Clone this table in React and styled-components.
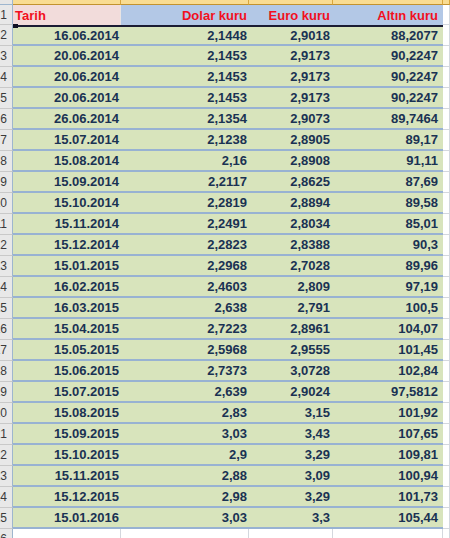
import React from "react";
import styled, { createGlobalStyle } from "styled-components";

const Global = createGlobalStyle`
  html, body { margin: 0; padding: 0; background: #ffffff; }
  body { width: 450px; height: 538px; overflow: hidden; font-family: "Liberation Sans", Arial, sans-serif; }
`;

const COLS = "13px 108px 128px 84px 110px 1fr";

const Sheet = styled.div`
  display: flex;
  flex-direction: column;
  width: 450px;
  height: 538px;
  overflow: hidden;
  background: #ffffff;
`;

const Row = styled.div`
  display: grid;
  grid-template-columns: ${COLS};
  height: ${(p) => p.$h}px;
  flex: none;
`;

const Corner = styled.div`
  background: #e6e6e6;
  border-right: 1px solid #9eb6ce;
  border-bottom: 1px solid #9eb6ce;
  box-sizing: border-box;
`;

const ColHead = styled.div`
  background: #f9dc92;
  border-right: 1px solid #d9a63d;
  border-bottom: 1px solid #c2922f;
  box-sizing: border-box;
`;

const RowHead = styled.div`
  background: #e8e8e8;
  border-right: 1px solid #9eb6ce;
  border-bottom: 1px solid #c9c9c9;
  box-sizing: border-box;
  color: #3a3a3a;
  font-size: 12px;
  line-height: 1;
  display: flex;
  align-items: center;
  justify-content: flex-end;
  padding-right: 5px;
  overflow: hidden;
  white-space: nowrap;
`;

const RowNum = styled.span`
  flex: none;
`;

const HeadCell = styled.div`
  background: ${(p) => (p.$pink ? "#f2dcdb" : "#b3c8e6")};
  ${(p) => (p.$pink ? "border-right: 1px solid #e9e4e4;" : "")}
  box-sizing: border-box;
  color: #f2101e;
  font-weight: bold;
  font-size: 13px;
  display: flex;
  align-items: center;
  justify-content: ${(p) => (p.$left ? "flex-start" : "flex-end")};
  padding: ${(p) => (p.$left ? "1px 0 0 2px" : `1px ${p.$pr || 3}px 0 0`)};
  white-space: nowrap;
`;

const Blank = styled.div`
  background: #ffffff;
  border-right: 1px solid #d4d8de;
  border-bottom: 1px solid #d4d8de;
  box-sizing: border-box;
`;

const DataCell = styled.div`
  position: relative;
  background: #d8e4bc;
  border-top: ${(p) => (p.$first ? "2px solid #1b1c33" : "none")};
  border-bottom: 2px solid #98b2d2;
  box-sizing: border-box;
  color: #1a3253;
  font-weight: bold;
  font-size: 13px;
  display: flex;
  align-items: center;
  justify-content: flex-end;
  padding-right: ${(p) => p.$pr || 3}px;
  white-space: nowrap;
`;

const Handle = styled.span`
  position: absolute;
  left: 0;
  top: -3px;
  width: 5px;
  height: 4px;
  background: #111122;
`;

const data = [
  ["16.06.2014", "2,1448", "2,9018", "88,2077"],
  ["20.06.2014", "2,1453", "2,9173", "90,2247"],
  ["20.06.2014", "2,1453", "2,9173", "90,2247"],
  ["20.06.2014", "2,1453", "2,9173", "90,2247"],
  ["26.06.2014", "2,1354", "2,9073", "89,7464"],
  ["15.07.2014", "2,1238", "2,8905", "89,17"],
  ["15.08.2014", "2,16", "2,8908", "91,11"],
  ["15.09.2014", "2,2117", "2,8625", "87,69"],
  ["15.10.2014", "2,2819", "2,8894", "89,58"],
  ["15.11.2014", "2,2491", "2,8034", "85,01"],
  ["15.12.2014", "2,2823", "2,8388", "90,3"],
  ["15.01.2015", "2,2968", "2,7028", "89,96"],
  ["16.02.2015", "2,4603", "2,809", "97,19"],
  ["16.03.2015", "2,638", "2,791", "100,5"],
  ["15.04.2015", "2,7223", "2,8961", "104,07"],
  ["15.05.2015", "2,5968", "2,9555", "101,45"],
  ["15.06.2015", "2,7373", "3,0728", "102,84"],
  ["15.07.2015", "2,639", "2,9024", "97,5812"],
  ["15.08.2015", "2,83", "3,15", "101,92"],
  ["15.09.2015", "3,03", "3,43", "107,65"],
  ["15.10.2015", "2,9", "3,29", "109,81"],
  ["15.11.2015", "2,88", "3,09", "100,94"],
  ["15.12.2015", "2,98", "3,29", "101,73"],
  ["15.01.2016", "3,03", "3,3", "105,44"],
];

const pads = [2, 2, 3, 5];

export default function App() {
  return (
    <>
      <Global />
      <Sheet>
        <Row $h={5}>
          <Corner />
          <ColHead />
          <ColHead />
          <ColHead />
          <ColHead />
          <ColHead />
        </Row>
        <Row $h={20}>
          <RowHead><RowNum>1</RowNum></RowHead>
          <HeadCell $pink $left>Tarih</HeadCell>
          <HeadCell $pr={2}>Dolar kuru</HeadCell>
          <HeadCell $pr={3}>Euro kuru</HeadCell>
          <HeadCell $pr={5}>Altın kuru</HeadCell>
          <Blank />
        </Row>
        {data.map((r, i) => (
          <Row $h={21} key={i}>
            <RowHead><RowNum>{i + 2}</RowNum></RowHead>
            {r.map((v, j) => (
              <DataCell key={j} $first={i === 0} $pr={pads[j]}>
                {i === 0 && j === 0 && <Handle />}
                {v}
              </DataCell>
            ))}
            <Blank />
          </Row>
        ))}
        <Row $h={21}>
          <RowHead><RowNum>26</RowNum></RowHead>
          <Blank />
          <Blank />
          <Blank />
          <Blank />
          <Blank />
        </Row>
      </Sheet>
    </>
  );
}
